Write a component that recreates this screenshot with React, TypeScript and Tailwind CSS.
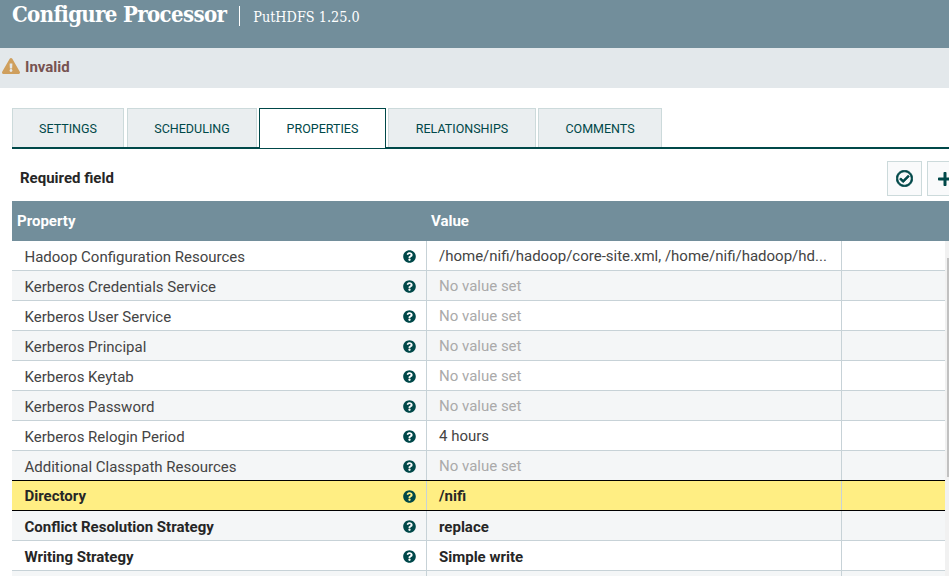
import { FaExclamationTriangle, FaPlus, FaQuestionCircle, FaRegCheckCircle } from "react-icons/fa";

const TABS = [
  { label: "SETTINGS", width: "w-[112px] mr-px" },
  { label: "SCHEDULING", width: "w-[130px]" },
  { label: "PROPERTIES", width: "w-[127px]", active: true },
  { label: "RELATIONSHIPS", width: "w-[148px]" },
  { label: "COMMENTS", width: "w-[124px]" },
];

type Row = { name: string; value: string; unset?: boolean; required?: boolean; selected?: boolean };

const ROWS: Row[] = [
  { name: "Hadoop Configuration Resources", value: "/home/nifi/hadoop/core-site.xml, /home/nifi/hadoop/hd..." },
  { name: "Kerberos Credentials Service", value: "No value set", unset: true },
  { name: "Kerberos User Service", value: "No value set", unset: true },
  { name: "Kerberos Principal", value: "No value set", unset: true },
  { name: "Kerberos Keytab", value: "No value set", unset: true },
  { name: "Kerberos Password", value: "No value set", unset: true },
  { name: "Kerberos Relogin Period", value: "4 hours" },
  { name: "Additional Classpath Resources", value: "No value set", unset: true },
  { name: "Directory", value: "/nifi", required: true, selected: true },
  { name: "Conflict Resolution Strategy", value: "replace", required: true },
  { name: "Writing Strategy", value: "Simple write", required: true },
  { name: "", value: "", required: true },
];

function PropertyRow({ row, odd }: { row: Row; odd: boolean }) {
  const bg = row.selected ? "bg-[#ffee83] border-black" : `${odd ? "bg-[#f4f6f7]" : "bg-white"} border-[#c7d2d7]`;
  return (
    <div className={`flex shrink-0 items-stretch border-b ${bg} ${row.selected ? "-mt-px h-[31px] border-t" : "h-[30px]"}`}>
      <div
        className={`flex w-[415px] shrink-0 items-center justify-between border-r border-[#c7d2d7] pl-[12.5px] pr-[10px] ${
          row.required ? "font-bold text-[#262626]" : "text-[#444]"
        }`}
      >
        <span className={row.selected ? "pt-[2px]" : "pt-[4px]"}>{row.name}</span>
        {row.name && <FaQuestionCircle className="mt-[2px] size-[13px] text-[#004849]" />}
      </div>
      <div
        className={`flex w-[415px] shrink-0 items-center border-r border-[#c7d2d7] pl-[12px] ${
          row.required && !row.selected ? "pt-[4px]" : "pt-[2px]"
        } ${row.unset ? "text-[#aaa]" : row.required ? "font-bold text-[#262626]" : "text-[#444]"}`}
      >
        {row.value}
      </div>
      <div className="flex-1" />
    </div>
  );
}

export default function App() {
  return (
    <div className="flex h-[576px] w-[949px] flex-col overflow-hidden bg-white font-['Roboto',sans-serif] text-[15px]">
      <div className="flex h-12 shrink-0 items-start bg-[#728e9b] pl-3 text-white">
        <h1 className="mt-[-1px] font-['DejaVu_Serif',serif] text-[22px] leading-[30px] font-bold tracking-[-0.65px] [font-stretch:condensed]">
          Configure Processor
        </h1>
        <div className="mt-[6px] ml-[13px] h-[20px] w-px bg-white" />
        <span className="mt-[7px] ml-[13px] font-['DejaVu_Serif',serif] text-[14.3px] leading-[20px] [font-stretch:condensed]">
          PutHDFS 1.25.0
        </span>
      </div>

      <div className="flex h-10 shrink-0 items-center gap-[5px] bg-[#e3e8eb] pl-[2px]">
        <FaExclamationTriangle className="mt-[-4px] size-[18px] text-[#cf9f5d]" />
        <span className="mt-[-2px] font-bold text-[#775351]">Invalid</span>
      </div>

      <div className="mt-5 ml-3 flex h-[41px] shrink-0 gap-[2px] border-b-2 border-[#004849]">
        {TABS.map((tab) => (
          <div
            key={tab.label}
            className={`flex items-center justify-center text-[12.5px] text-[#004849] ${tab.width} ${
              tab.active
                ? "h-[40px] border border-b-0 border-[#004849] bg-white pt-[2px]"
                : "h-[39px] border border-b-0 border-[#ccdadb] bg-[#eaeef0] pt-[3px]"
            }`}
          >
            {tab.label}
          </div>
        ))}
      </div>

      <div className="ml-3 -mr-[13px] flex h-[52px] shrink-0 items-center justify-between pt-[7px] pl-2">
        <span className="font-bold text-[#262626]">Required field</span>
        <div className="flex gap-[5px]">
          <button className="flex size-[35px] items-center justify-center border border-[#ccdadb] bg-[#f9fafb]">
            <FaRegCheckCircle className="size-[17px] text-[#004849]" stroke="currentColor" strokeWidth={24} />
          </button>
          <button className="flex size-[35px] items-center justify-center border border-[#ccdadb] bg-[#f9fafb]">
            <FaPlus className="size-[16px] text-[#004849]" />
          </button>
        </div>
      </div>

      <div className="ml-3 flex h-10 shrink-0 items-center bg-[#728e9b] font-bold text-white">
        <span className="w-[419px] pl-[5px]">Property</span>
        <span>Value</span>
      </div>

      <div className="ml-3 flex min-h-0 flex-1">
        <div className="flex min-w-0 flex-1 flex-col">
          {ROWS.map((row, i) => (
            <PropertyRow key={i} row={row} odd={i % 2 === 1} />
          ))}
        </div>
        <div className="flex w-1 shrink-0 justify-end bg-[#f1f1f1] pt-[17px]">
          <div className="h-[219px] w-[2px] bg-[#c1c1c1]" />
        </div>
      </div>
    </div>
  );
}
